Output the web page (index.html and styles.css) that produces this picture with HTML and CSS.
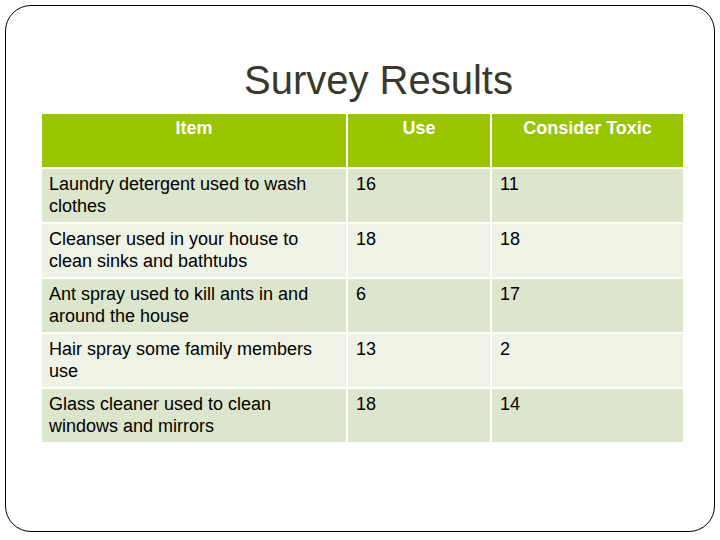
FILE: index.html
```html
<!DOCTYPE html>
<html>
<head>
<meta charset="utf-8">
<link rel="stylesheet" href="styles.css">
</head>
<body>
<div class="slide">
  <h1 class="title">Survey Results</h1>
  <table class="survey">
    <colgroup>
      <col class="c-item"><col class="c-use"><col class="c-tox">
    </colgroup>
    <thead>
      <tr><th>Item</th><th>Use</th><th>Consider Toxic</th></tr>
    </thead>
    <tbody>
      <tr class="dark"><td>Laundry detergent used to wash clothes</td><td>16</td><td>11</td></tr>
      <tr class="light"><td>Cleanser used in your house to clean sinks and bathtubs</td><td>18</td><td>18</td></tr>
      <tr class="dark"><td>Ant spray used to kill ants in and around the house</td><td>6</td><td>17</td></tr>
      <tr class="light"><td>Hair spray some family members use</td><td>13</td><td>2</td></tr>
      <tr class="dark"><td>Glass cleaner used to clean windows and mirrors</td><td>18</td><td>14</td></tr>
    </tbody>
  </table>
</div>
</body>
</html>
```
FILE: styles.css
```css
html, body {
  margin: 0;
  padding: 0;
  background: #ffffff;
}
body {
  font-family: "Liberation Sans", Arial, sans-serif;
}
.slide {
  box-sizing: border-box;
  margin: 5px;
  width: 710px;
  height: 527px;
  border: 1px solid #000;
  border-radius: 26px;
  padding-top: 51px;
  padding-left: 34px;
}
.title {
  margin: 0 0 9px 0;
  padding-left: 18px;
  width: 641px;
  text-align: center;
  font-weight: normal;
  font-size: 40px;
  line-height: 46px;
  color: #38382c;
}
.survey {
  border-collapse: separate;
  border-spacing: 2px;
  table-layout: fixed;
  font-size: 18px;
  line-height: 21.6px;
  color: #000;
}
.c-item { width: 304px; }
.c-use { width: 142px; }
.c-tox { width: 191px; }
.survey th {
  box-sizing: border-box;
  height: 53px;
  padding: 4px 7px 0 7px;
  vertical-align: top;
  background: #99c400;
  color: #fff;
  font-weight: bold;
  text-align: center;
}
.survey td {
  box-sizing: border-box;
  height: 53px;
  padding: 5px 7px 0 7px;
  vertical-align: top;
  text-align: left;
}
.survey tr.dark td { background: #dce6cc; }
.survey tr.light td { background: #eef3e6; }
.survey td:not(:first-child) { padding-left: 8px; }
```
